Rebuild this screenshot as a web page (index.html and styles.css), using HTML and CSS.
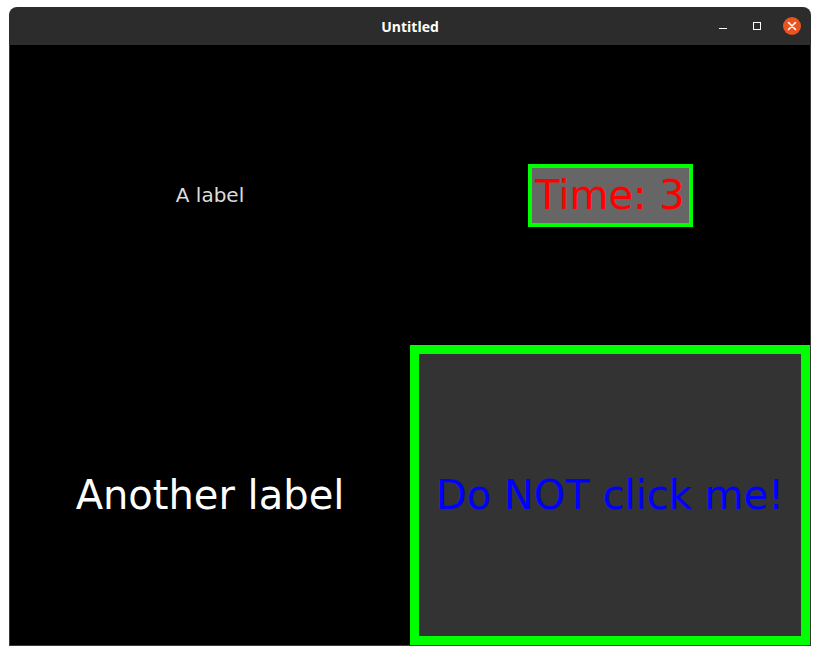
FILE: index.html
```html
<!DOCTYPE html>
<html>
<head>
<meta charset="utf-8">
<link rel="stylesheet" href="styles.css">
</head>
<body>
<div class="window">
  <div class="titlebar">
    <div class="title">Untitled</div>
    <div class="controls">
      <svg class="ctl" width="16" height="16" viewBox="0 0 16 16"><rect x="4" y="10" width="8" height="1" fill="#ffffff"/></svg>
      <svg class="ctl" width="16" height="16" viewBox="0 0 16 16"><rect x="4.5" y="4.5" width="7" height="7" fill="none" stroke="#ffffff" stroke-width="1"/></svg>
      <svg class="ctl close" width="18" height="18" viewBox="0 0 18 18"><circle cx="9" cy="9" r="9" fill="#e95420"/><path d="M5.5 5.5 L12.5 12.5 M12.5 5.5 L5.5 12.5" stroke="#ffffff" stroke-width="1.6" stroke-linecap="round"/></svg>
    </div>
  </div>
  <div class="content">
    <div class="cell"><span class="small-label">A label</span></div>
    <div class="cell"><span class="time">Time: 3</span></div>
    <div class="cell"><span class="big-label">Another label</span></div>
    <div class="cell"><button class="danger">Do NOT click me!</button></div>
  </div>
</div>
</body>
</html>
```
FILE: styles.css
```css
html, body {
  margin: 0;
  padding: 0;
  background: #ffffff;
}
body {
  padding: 7px 0 0 9px;
  font-family: "DejaVu Sans", sans-serif;
}
.window {
  width: 802px;
  display: flex;
  flex-direction: column;
}
.titlebar {
  height: 38px;
  background: #2c2c2c;
  border-radius: 8px 8px 0 0;
  display: flex;
  align-items: center;
  justify-content: center;
  position: relative;
}
.title {
  color: #ffffff;
  font-family: "Open Sans", sans-serif;
  font-weight: 700;
  font-size: 14px;
  margin-top: 1px;
}
.controls {
  position: absolute;
  right: 10px;
  top: 10px;
  display: flex;
  align-items: center;
  gap: 18px;
}
.ctl {
  display: block;
}
.content {
  display: grid;
  grid-template-columns: 400px 400px;
  grid-template-rows: 300px 300px;
  background: #000000;
  border: 1px solid #3a3a3a;
  border-top: none;
}
.cell {
  display: flex;
  align-items: center;
  justify-content: center;
}
.small-label {
  color: #dcdcdc;
  font-size: 20px;
}
.time {
  color: #ff0000;
  background: #666666;
  border: 4px solid #00ff00;
  font-size: 40px;
  width: 157px;
  height: 55px;
  display: flex;
  align-items: center;
  justify-content: center;
  box-sizing: content-box;
}
.big-label {
  color: #ffffff;
  font-size: 40px;
}
.danger {
  width: 400px;
  height: 300px;
  box-sizing: border-box;
  border: 9px solid #00ff00;
  background: #333333;
  color: #0000ff;
  font-family: "DejaVu Sans", sans-serif;
  font-size: 40px;
  padding: 0;
  margin: 0;
}
```
